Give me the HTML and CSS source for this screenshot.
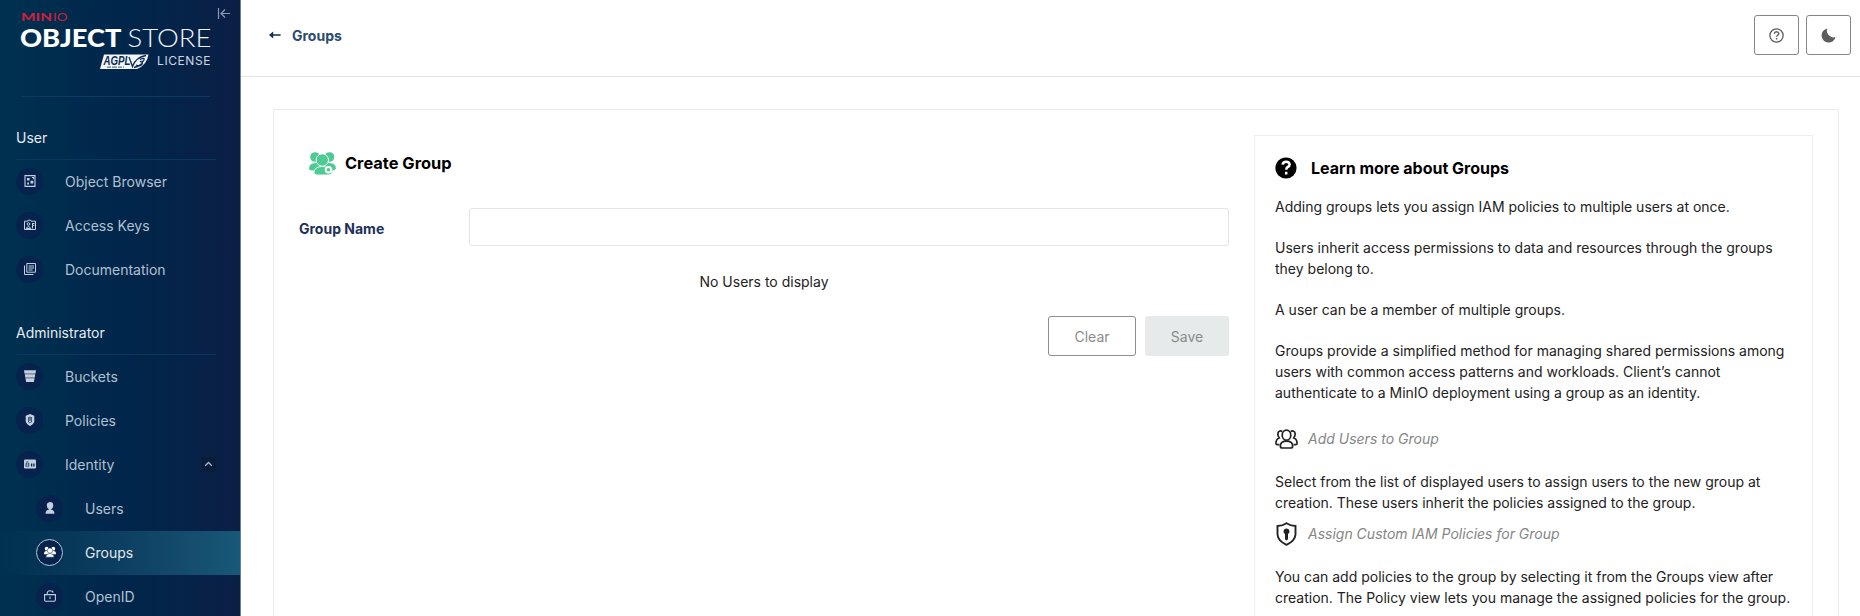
FILE: index.html
```html
<!DOCTYPE html>
<html lang="en">
<head>
<meta charset="utf-8">
<title>Create Group</title>
<link rel="stylesheet" href="styles.css">
</head>
<body>
<div class="app">
  <nav class="sidebar">
    <div class="brand">
      <svg class="logo" width="240" height="80" viewBox="0 0 240 80">
        <g fill="#c8203f">
          <text class="logo-min" x="21" y="21.3" textLength="31" lengthAdjust="spacingAndGlyphs">MIN</text>
          <text class="logo-io" x="53" y="21.3" textLength="14.500" lengthAdjust="spacingAndGlyphs">IO</text>
        </g>
        <text class="logo-object" x="20" y="47" textLength="101.500" lengthAdjust="spacingAndGlyphs">OBJECT</text>
        <text class="logo-store" x="127.500" y="47" textLength="84" lengthAdjust="spacingAndGlyphs">STORE</text>
        <path d="M104 54.500H148.500Q147 65 137 69H100Z" fill="#f2f5f8"/>
        <text class="logo-agpl" x="103.500" y="65" textLength="27" lengthAdjust="spacingAndGlyphs">AGPL</text>
        <path d="M129 57l3.500 9.500Q136 57 146 55.500M140 59.500q5-2.500 4 .3t-4 1.700q3.500 0 2 2.700t-6 .8M134 67.500q5-1 8-4" fill="none" stroke="#0b2b52" stroke-width="1.300"/>
        <path d="M107 67.200h17" stroke="#5c7590" stroke-width="1.200" stroke-dasharray="4 1 5 1"/>
        <text class="logo-license" x="157" y="65.200" textLength="53.500" lengthAdjust="spacing">LICENSE</text>
        <g fill="none" stroke="#8c9ab0" stroke-width="1.200"><path d="M218.500 8v11M221 13.500h9M225 9.500l-4 4 4 4"/></g>
      </svg>
    </div>
    <div class="section">
      <h2 class="section-title">User</h2>
      <a class="item"><span class="disc"><svg viewBox="0 0 12 12"><path d="M1 .6h10v10.800H1z" fill="none" stroke="currentColor" stroke-width="1.100"/><path d="M3 3h2.600v2.600H3zM6.500 5.800h2.800v2.800H6.500zM3.200 7.600h1.800v1.800H3.200zM7.500 2l2.500 2.500V2z" fill="currentColor"/></svg></span>Object Browser</a>
      <a class="item"><span class="disc"><svg viewBox="0 0 12 12"><path d="M.5 2.200h3.300l.4-1h2.400l.4 1h4.500v8.300H.5z" fill="none" stroke="currentColor"/><circle cx="4.500" cy="5" r="1.300" fill="none" stroke="currentColor"/><path d="M2.200 9.500q2.300-4 4.600 0zM8 4.500h2.500M8 6.300h2.500M8.500 5v4.500" fill="none" stroke="currentColor"/></svg></span>Access Keys</a>
      <a class="item"><span class="disc"><svg viewBox="0 0 12 12"><path d="M2.800.5h8.700v8.700H2.800zM.5 2.500v9h9M4.500 3h5.500M4.500 5h5.500M4.500 7h4" fill="none" stroke="currentColor" stroke-width="1"/></svg></span>Documentation</a>
    </div>
    <div class="section">
      <h2 class="section-title">Administrator</h2>
      <a class="item"><span class="disc"><svg viewBox="0 0 12 12"><path d="M0 .3h12l-.5 3H.5zM.8 4.300h10.400l-.5 3H1.300zM1.500 8.300h9l-.6 3.600H2.100z" fill="currentColor"/><path d="M.6 3.300h10.800M1.200 7.300h9.600" stroke="currentColor" stroke-opacity=".5" stroke-width="2"/></svg></span>Buckets</a>
      <a class="item"><span class="disc"><svg viewBox="0 0 12 12"><path d="M6 0l4.300 1.800v5.500Q10 10 6 12 2 10 1.700 7.300V1.800z" fill="currentColor"/><path d="M4.300 3.300Q6 2 7.700 3.300V8q-1.700 1.500-3.400 0z" fill="#06234d"/><path d="M6 3.500v4.500M5 7.500h2" stroke="currentColor" stroke-width="1.100"/></svg></span>Policies</a>
      <a class="item"><span class="disc"><svg viewBox="0 0 12 12"><rect y="1.500" width="12" height="9" rx="1.300" fill="currentColor"/><path d="M1.500 5.500h1v-2h1.800v2h1v3H1.500zM6.500 3.500h4M7 5.500h1.300v3H7zM9.300 5.500h1.300v3H9.300z" fill="#06234d"/><path d="M3.400 4v4M1.500 7h4" stroke="currentColor" stroke-width=".8"/></svg></span>Identity<span class="caret"><svg width="9" height="6" viewBox="0 0 9 6"><path d="M1.200 4.800l3.300-3.300 3.300 3.300" fill="none" stroke="#a9b4c5" stroke-width="1.300"/></svg></span></a>
      <a class="item nested"><span class="disc"><svg viewBox="0 0 12 12"><path d="M6 0q3.200 0 3.200 3.300T7.200 7v.8q3 .2 3.300 4H1.500q.3-3.800 3.300-4V7Q2.800 6 2.800 3.300T6 0z" fill="currentColor"/></svg></span>Users</a>
      <a class="item nested active"><span class="disc"><svg viewBox="0 0 12 12"><g fill="currentColor"><circle cx="2.700" cy="2.700" r="1.900"/><circle cx="9.300" cy="2.700" r="1.900"/><path d="M0 8.300q0-3.300 2.500-3.300h7Q12 5 12 8.300z"/><circle cx="6" cy="4.600" r="2.700" stroke="#06234d" stroke-width=".5"/><path d="M1.800 11.200q.3-3.700 4.200-3.700t4.200 3.700z" stroke="#06234d" stroke-width=".5"/></g></svg></span>Groups</a>
      <a class="item nested"><span class="disc"><svg viewBox="0 0 12 12"><path d="M.6 4.600h10.800v5.200q0 1.400-1.400 1.400H2Q.6 11.200.6 9.800zM3.200 4.500Q2.800.8 6 .8t3 2M6 6.500v2.500" fill="none" stroke="currentColor" stroke-width="1.100"/></svg></span>OpenID</a>
    </div>
  </nav>
  <main class="main">
    <header class="header">
      <a class="back"><svg width="12" height="8" viewBox="0 0 12 8"><path d="M4.200.5v2.700H11.600v1.600H4.200v2.700L0 4z" fill="#0d2d5a"/></svg>Groups</a>
      <div class="tools">
        <button class="tool"><svg width="15" height="15" viewBox="0 0 15 15"><circle cx="7.500" cy="7.500" r="6.600" fill="none" stroke="#5e5e5e" stroke-width="1.300"/><path d="M5.400 5.700q.2-2 2.200-2t2.200 1.900q0 1.100-1.200 1.700-1 .5-1 1.500M7.600 10v1.600" fill="none" stroke="#5e5e5e" stroke-width="1.400"/></svg></button>
        <button class="tool"><svg width="15" height="15" viewBox="0 0 15 15"><path d="M6.300.5a7.100 7.100 0 1 0 8.300 8.500A6.600 6.600 0 0 1 6.300.5z" fill="#5e5e5e"/></svg></button>
      </div>
    </header>
    <section class="panel">
      <form class="form">
        <h1 class="form-title"><svg width="27" height="23" viewBox="0 0 27 23"><g fill="#4ccb92"><circle cx="6" cy="5" r="4.800"/><circle cx="20.500" cy="5" r="4.800"/><path d="M0 17q0-6 6.500-6h14q6.500 0 6.500 6-2 1.500-5 1.500H5Q1 18.500 0 17z"/><circle cx="13.300" cy="8" r="6.200" stroke="#fff" stroke-width="1"/><path d="M4.800 21q.5-6.500 8.500-6.500T23 21q-1 2-3.500 2H8Q5.500 23 4.800 21z" stroke="#fff" stroke-width=".9"/><circle cx="19.500" cy="17.700" r="4"/></g><circle cx="19.500" cy="17.700" r="2.800" fill="none" stroke="#fff" stroke-width="2"/></svg>Create Group</h1>
        <div class="field"><label for="group-name">Group Name</label><input id="group-name" type="text"></div>
        <p class="empty">No Users to display</p>
        <div class="actions"><button class="btn btn-clear" type="button">Clear</button><button class="btn btn-save" type="button">Save</button></div>
      </form>
      <aside class="help">
        <h3 class="help-title"><svg width="22" height="22" viewBox="0 0 22 22"><circle cx="11" cy="11" r="10.600"/><path d="M7.600 7.700q.4-3 3.600-3t3.400 2.700q0 1.700-1.900 2.600-1.400.7-1.400 2.700M11.200 14.700v2.800" fill="none" stroke="#fff" stroke-width="2.500"/></svg>Learn more about Groups</h3>
        <p>Adding groups lets you assign IAM policies to multiple users at once.</p>
        <p>Users inherit access permissions to data and resources through the groups<br>they belong to.</p>
        <p>A user can be a member of multiple groups.</p>
        <p>Groups provide a simplified method for managing shared permissions among<br>users with common access patterns and workloads. Client’s cannot<br>authenticate to a MinIO deployment using a group as an identity.</p>
        <h4 class="topic topic-users"><svg width="23" height="20" viewBox="0 0 23 20"><g fill="none" stroke="#222" stroke-width="1.700"><ellipse cx="11.500" cy="6.200" rx="4.300" ry="5"/><path d="M7.200 2.500Q5 1 3.400 3q-1.400 3 .8 6-3 .8-3.300 5.200 0 1.500 1.500 1.500h2M15.800 2.500q2.200-1.500 3.800.5 1.400 3-.8 6 3 .8 3.300 5.200 0 1.500-1.500 1.500h-2"/><path d="M5.300 17q.2-4.800 6.200-4.800t6.200 4.800q0 2-2 2H7.300q-2 0-2-2z"/></g></svg>Add Users to Group</h4>
        <p class="after-topic">Select from the list of displayed users to assign users to the new group at<br>creation. These users inherit the policies assigned to the group.</p>
        <h4 class="topic topic-policies"><svg width="23" height="24" viewBox="0 0 23 24"><path d="M11.500 1.200q4 2.600 9 2.800v8.500q-.5 6.500-9 10.300-8.500-3.800-9-10.300V4q5-.2 9-2.800z" fill="none" stroke="#222" stroke-width="1.900"/><path d="M11.500 6.500a3 3 0 0 1 1.500 5.600v5.200l-1.500 1.200-1.500-1.200v-5.200a3 3 0 0 1 1.500-5.600z" fill="#222"/></svg>Assign Custom IAM Policies for Group</h4>
        <p class="after-topic">You can add policies to the group by selecting it from the Groups view after<br>creation. The Policy view lets you manage the assigned policies for the group.</p>
      </aside>
    </section>
  </main>
</div>
</body>
</html>
```

FILE: styles.css
```css
* { box-sizing: border-box; }
body { margin: 0; font: 14px/21px Inter, "Liberation Sans", sans-serif; color: #000; background: #fff; overflow: hidden; }
h1, h2, h3, h4, p { margin: 0; }
button { font: inherit; padding: 0; background: #fff; }
.app { display: flex; height: 616px; overflow: hidden; }

.sidebar { width: 241px; flex: none; border-right: 1px solid #6a7f9d; background: linear-gradient(90deg, #003150 0%, #00264b 50%, #0b1f45 100%); }
.brand { height: 97px; }
.brand::after { content: ""; display: block; height: 1px; margin: 16px 30px 0 21px; background: #0b3a63; }
.logo { display: block; }
.logo .logo-min { font: 900 11px Lato, sans-serif; }
.logo .logo-io { font: 400 11px Lato, sans-serif; }
.logo .logo-object { font: 900 25px Lato, sans-serif; fill: #fff; }
.logo .logo-store { font: 300 25px Lato, sans-serif; fill: #eef2f6; }
.logo .logo-agpl { font: italic 700 12px "Liberation Sans", sans-serif; fill: #0b2b52; }
.logo .logo-license { font: 400 12px Inter, sans-serif; fill: #ced6e0; }
.section { padding-top: 30px; }
.section-title { height: 33px; margin: 0 24px 0 16px; border-bottom: 1px solid #083860; font-size: 14px; font-weight: 400; line-height: 21px; color: #e6ebf1; }
.item { display: flex; align-items: center; height: 44px; padding: 0 24px 2px 16px; color: #b3c0d0; }
.nested { padding-left: 36px; }
.disc { display: grid; place-items: center; width: 27px; height: 27px; margin-right: 22px; border-radius: 50%; background: #06234d; color: #c5d0df; }
.disc svg { width: 12px; height: 12px; }
.active { color: #e1e8ef; background: linear-gradient(90deg, rgba(24,89,120,0) 0%, #185878 100%); }
.active .disc { border: 1.500px solid #b9c6d3; color: #fff; }
.caret { display: grid; place-items: center; width: 15px; height: 15px; margin-left: auto; background: #081c3c; }

.main { flex: 1; min-width: 0; }
.header { display: flex; justify-content: space-between; align-items: flex-start; height: 77px; padding: 15px 9px 0 28px; border-bottom: 1px solid #e5e5e5; }
.back { display: flex; align-items: center; gap: 11px; height: 40px; font-weight: 700; color: #2b4c6f; }
.tools { display: flex; gap: 7px; }
.tool { display: grid; place-items: center; width: 45px; height: 40px; border: 1px solid #858787; border-radius: 3px; }
.panel { display: flex; margin: 32px 21px 0 32px; height: 620px; padding: 25px 25px 0 25px; border: 1px solid #eaeaea; border-radius: 2px; }
.form { flex: 1; padding-right: 25px; }
.form-title { display: flex; align-items: center; gap: 9px; height: 24px; margin: 16px 0 0 10px; font-size: 16.400px; font-weight: 700; }
.field { display: flex; align-items: center; margin-top: 33px; }
.field label { width: 170px; padding-top: 3px; font-weight: 700; color: #1c3159; }
.field input { flex: 1; height: 38px; border: 1px solid #e4e4e4; border-radius: 3px; background: #fff; }
.empty { margin-top: 25px; text-align: center; color: #222; }
.actions { display: flex; justify-content: flex-end; gap: 9px; margin-top: 24px; }
.btn { height: 40px; border-radius: 3px; color: #8a8c8c; }
.btn-clear { width: 88px; border: 1px solid #8d8f8f; }
.btn-save { width: 84px; border: 0; background: #e6eaeb; }
.help { width: 559px; flex: none; height: 600px; padding: 20px; border: 1px solid #eee; white-space: nowrap; color: #222; }
.help-title { display: flex; align-items: center; gap: 14px; height: 24px; margin-bottom: 16px; font-size: 16px; font-weight: 700; color: #000; }
.help p { margin-bottom: 20px; }
.topic { display: flex; align-items: center; gap: 10px; height: 24px; padding-bottom: 2px; font-size: 14px; font-style: italic; font-weight: 400; color: #858585; }
.topic svg { margin-bottom: -2px; }
.topic-users { margin: 24px 0 20px; }
.help .after-topic { margin: 0; }
.topic-policies { margin: 9px 0 20px; }
```
